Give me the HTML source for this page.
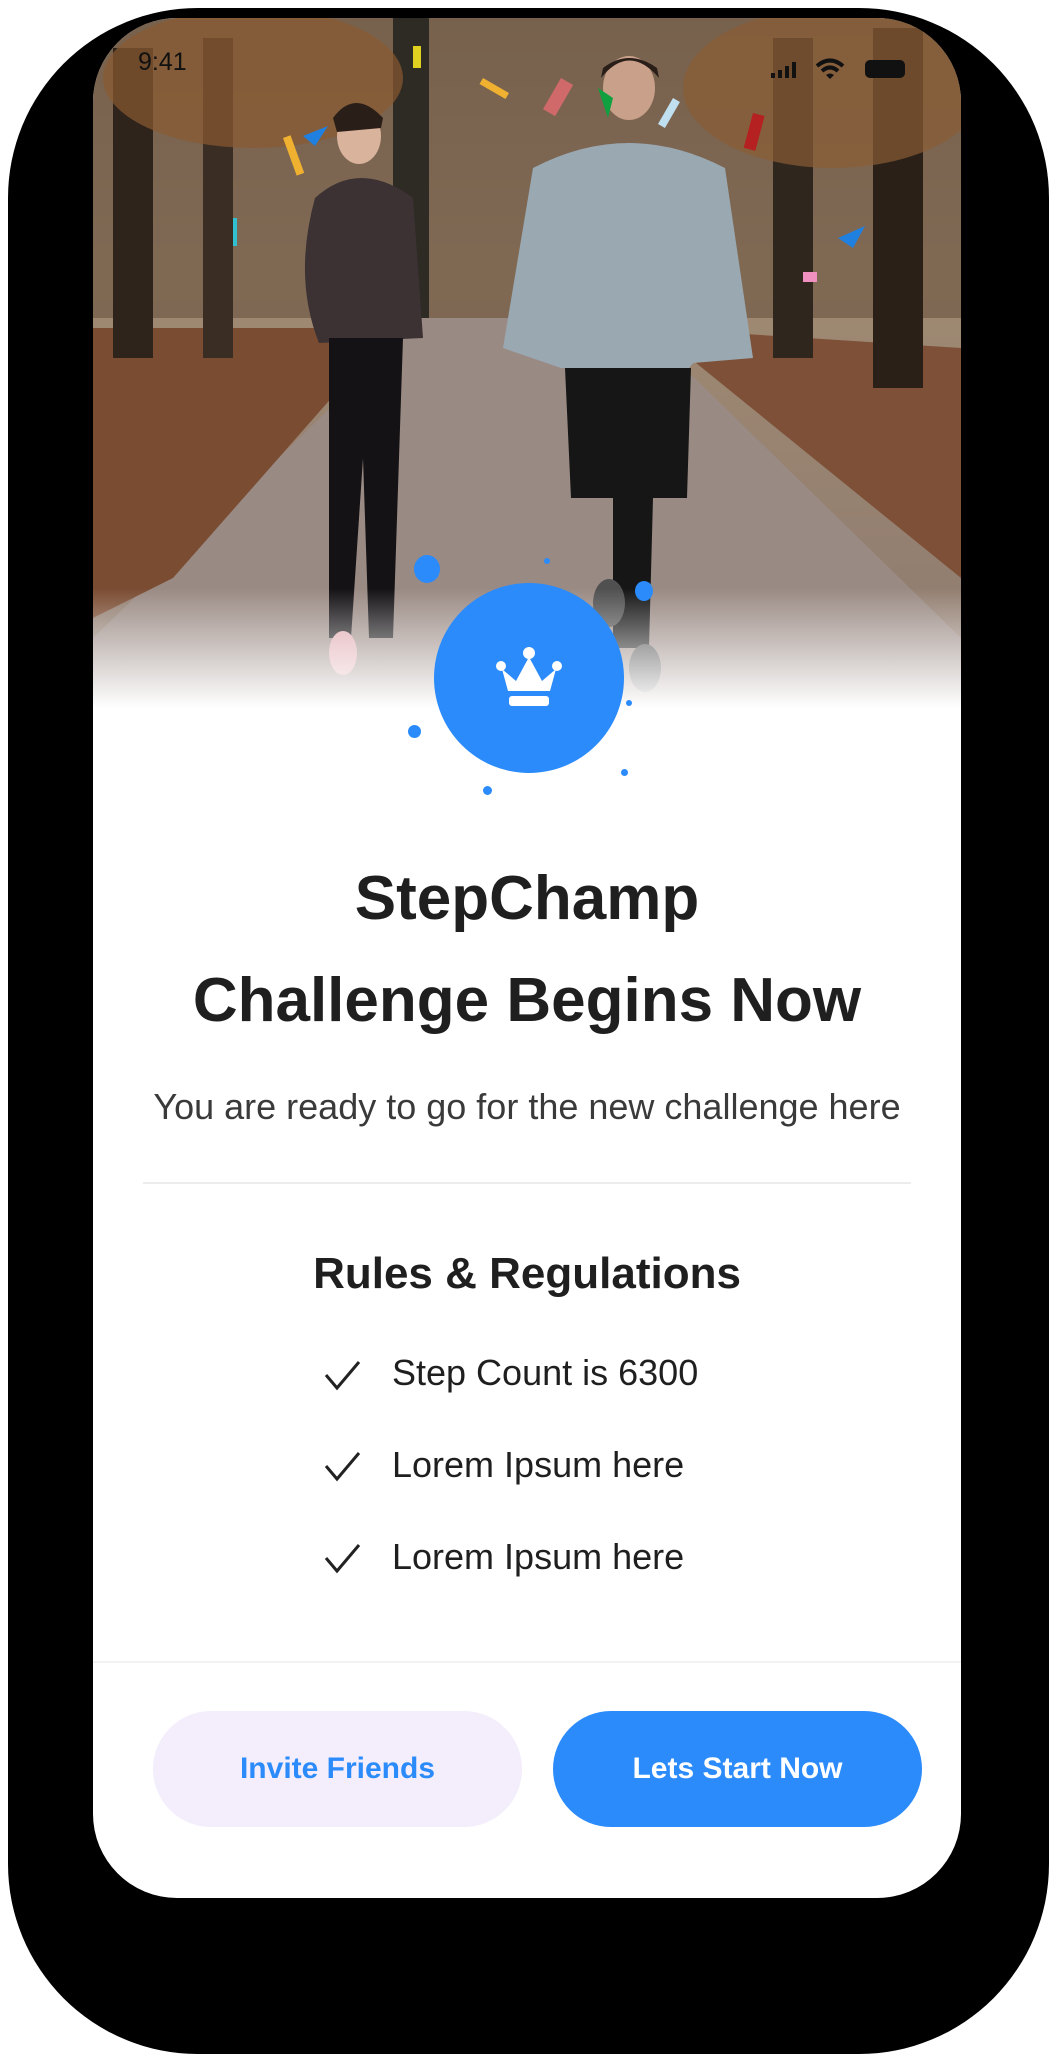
<!DOCTYPE html>
<html><head><meta charset="utf-8"><style>
html,body{margin:0;padding:0;background:#fff;}
body{width:1056px;height:2069px;position:relative;overflow:hidden;font-family:"Liberation Sans",sans-serif;}
.outer{position:absolute;left:8px;top:8px;width:1041px;height:2046px;background:#000;border-radius:190px;}
.screen{position:absolute;left:93px;top:18px;width:868px;height:1880px;background:#fff;border-radius:84px;overflow:hidden;}
.abs{position:absolute;}
.t{position:absolute;left:0;width:868px;text-align:center;color:#1f1f1f;}
.li{position:absolute;left:299px;font-size:36px;color:#1f1f1f;}
.btn{position:absolute;top:1693px;height:116px;width:369px;border-radius:58px;font-size:30px;font-weight:bold;text-align:center;line-height:116px;}
</style></head><body>
<div class="outer"></div>
<div class="screen">
<svg class="abs" style="left:0;top:0" width="868" height="700" viewBox="0 0 868 700">
<defs>
<linearGradient id="sky" x1="0" y1="0" x2="0" y2="1"><stop offset="0" stop-color="#8a7763"/><stop offset="0.35" stop-color="#a08a72"/><stop offset="1" stop-color="#8d7a70"/></linearGradient>
<linearGradient id="fade" x1="0" y1="0" x2="0" y2="1"><stop offset="0" stop-color="#fff" stop-opacity="0"/><stop offset="1" stop-color="#fff" stop-opacity="1"/></linearGradient>
</defs>
<rect width="868" height="700" fill="url(#sky)"/>
<rect x="0" y="0" width="868" height="300" fill="#6a5440" opacity="0.6"/>
<polygon points="330,300 540,300 868,620 868,700 0,700 0,620" fill="#9a8a84"/>
<polygon points="0,310 300,310 80,560 0,600" fill="#7a4c32"/>
<polygon points="560,310 868,330 868,560" fill="#7e5038"/>
<rect x="20" y="30" width="40" height="310" fill="#2e241c"/>
<rect x="110" y="20" width="30" height="320" fill="#3a2e24"/>
<rect x="300" y="0" width="36" height="300" fill="#2e2a24"/>
<rect x="680" y="20" width="40" height="320" fill="#2f261e"/>
<rect x="780" y="10" width="50" height="360" fill="#2a2018"/>
<ellipse cx="160" cy="60" rx="150" ry="70" fill="#8a5a30" opacity="0.7"/>
<ellipse cx="740" cy="70" rx="150" ry="80" fill="#8a5c34" opacity="0.7"/>
<ellipse cx="266" cy="118" rx="22" ry="28" fill="#d9b39c"/>
<path d="M240 100 Q262 70 290 100 L288 110 L244 114Z" fill="#2a1e18"/>
<path d="M222 180 Q266 140 320 180 L330 320 L226 325 Q200 260 222 180Z" fill="#3c3234"/>
<path d="M236 320 L310 320 L300 620 L276 620 L270 440 L258 620 L236 620Z" fill="#141214"/>
<ellipse cx="250" cy="635" rx="14" ry="22" fill="#e0aab0"/>
<ellipse cx="536" cy="70" rx="26" ry="32" fill="#c9a08a"/>
<path d="M508 60 Q536 25 566 60 L564 50 Q536 30 510 50Z" fill="#2a1e18"/>
<path d="M440 150 Q536 100 632 150 L660 340 L600 345 L596 350 L468 350 L410 330 Z" fill="#9aa8b2"/>
<path d="M472 350 L598 350 L594 480 L560 480 L556 630 L520 630 L520 480 L478 480Z" fill="#161616"/>
<ellipse cx="516" cy="585" rx="16" ry="24" fill="#505050"/>
<ellipse cx="552" cy="650" rx="16" ry="24" fill="#505050"/>
<rect x="190" y="120" width="8" height="40" fill="#f0b030" transform="rotate(-20 190 120)"/>
<rect x="390" y="60" width="30" height="7" fill="#f0b030" transform="rotate(30 390 60)"/>
<rect x="320" y="28" width="8" height="22" fill="#e0d020"/>
<rect x="468" y="60" width="14" height="36" fill="#d06a6a" transform="rotate(30 468 60)"/>
<rect x="660" y="95" width="12" height="36" fill="#b52020" transform="rotate(15 660 95)"/>
<polygon points="745,220 772,208 760,230" fill="#2080e0"/>
<rect x="710" y="254" width="14" height="10" fill="#f090c0"/>
<polygon points="505,70 520,80 515,100" fill="#10a040"/>
<rect x="580" y="80" width="8" height="30" fill="#c0e0f0" transform="rotate(30 580 80)"/>
<polygon points="210,118 235,108 222,128" fill="#2080e0"/>
<rect x="140" y="200" width="4" height="28" fill="#30c0d0"/>
<rect y="570" width="868" height="120" fill="url(#fade)"/>
<rect y="689" width="868" height="11" fill="#fff"/>
</svg>
<div class="abs" style="left:45px;top:30px;font-size:25px;color:#111;">9:41</div>
<div class="abs" style="left:678px;top:44px;width:28px;height:16px;">
<div class="abs" style="left:0;top:11px;width:4px;height:5px;background:#111"></div>
<div class="abs" style="left:7px;top:8px;width:4px;height:8px;background:#111"></div>
<div class="abs" style="left:14px;top:4px;width:4px;height:12px;background:#111"></div>
<div class="abs" style="left:21px;top:0;width:4px;height:16px;background:#111"></div></div>
<svg class="abs" style="left:722px;top:40px" width="30" height="22" viewBox="0 0 30 22"><path d="M2 8 Q15 -3 28 8 M7 13 Q15 6 23 13" stroke="#111" stroke-width="4" fill="none"/><path d="M11 17 L15 21 L19 17 Q15 14 11 17Z" fill="#111"/></svg>
<div class="abs" style="left:772px;top:42px;width:40px;height:18px;border-radius:5px;background:#111;"></div>
<div class="abs" style="left:341px;top:565px;width:190px;height:190px;border-radius:50%;background:#2b8bfb;"></div>
<svg class="abs" style="left:403px;top:627px" width="66" height="66" viewBox="0 0 66 66"><circle cx="33" cy="8" r="6" fill="#fff"/><circle cx="5" cy="21" r="5" fill="#fff"/><circle cx="61" cy="21" r="5" fill="#fff"/><path d="M6 24 L20 36 L33 12 L46 36 L60 24 L54 46 L12 46Z" fill="#fff"/><rect x="13" y="51" width="40" height="10" rx="3" fill="#fff"/></svg>
<div class="abs" style="left:321px;top:537px;width:26px;height:28px;border-radius:50%;background:#2b8bfb"></div>
<div class="abs" style="left:542px;top:563px;width:18px;height:20px;border-radius:50%;background:#2b8bfb"></div>
<div class="abs" style="left:315px;top:707px;width:13px;height:13px;border-radius:50%;background:#2b8bfb"></div>
<div class="abs" style="left:390px;top:768px;width:9px;height:9px;border-radius:50%;background:#2b8bfb"></div>
<div class="abs" style="left:528px;top:751px;width:7px;height:7px;border-radius:50%;background:#2b8bfb"></div>
<div class="abs" style="left:533px;top:682px;width:6px;height:6px;border-radius:50%;background:#2b8bfb"></div>
<div class="abs" style="left:451px;top:540px;width:6px;height:6px;border-radius:50%;background:#2b8bfb"></div>
<div class="t" style="top:846px;font-size:62px;font-weight:bold;line-height:70px;">StepChamp</div>
<div class="t" style="top:948px;font-size:62px;font-weight:bold;line-height:70px;">Challenge Begins Now</div>
<div class="t" style="top:1068px;font-size:36px;color:#3a3a3a;">You are ready to go for the new challenge here</div>
<div class="abs" style="left:50px;top:1164px;width:768px;height:2px;background:#ececec"></div>
<div class="t" style="top:1231px;font-size:44px;font-weight:bold;">Rules &amp; Regulations</div>
<svg class="abs" style="left:230px;top:1340px" width="40" height="280" viewBox="0 0 40 280" fill="none" stroke="#222" stroke-width="3"><path d="M3 17 L14 30 L36 4"/><path d="M3 108 L14 121 L36 95"/><path d="M3 200 L14 213 L36 187"/></svg>
<div class="li" style="top:1334px;">Step Count is 6300</div>
<div class="li" style="top:1426px;">Lorem Ipsum here</div>
<div class="li" style="top:1518px;">Lorem Ipsum here</div>
<div class="abs" style="left:0;top:1643px;width:868px;height:2px;background:#f2f2f2"></div>
<div class="btn" style="left:60px;background:#f3edfc;color:#2b8bfb;">Invite Friends</div>
<div class="btn" style="left:460px;background:#2b8bfb;color:#fff;">Lets Start Now</div>
</div>
</body></html>
